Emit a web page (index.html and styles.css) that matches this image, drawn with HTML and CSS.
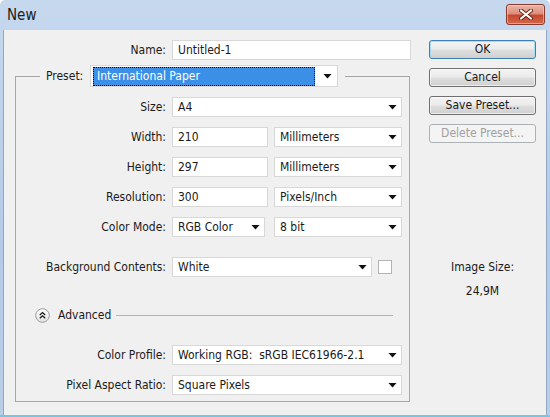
FILE: index.html
```html
<!DOCTYPE html>
<html>
<head>
<meta charset="utf-8">
<link rel="stylesheet" href="styles.css">
</head>
<body>
<div class="window">
  <div class="titlebar">
    <span class="title">New</span>
    <div class="close">
      <svg width="14" height="11" viewBox="0 0 14 11">
        <path d="M2 1.5 L12 9.5 M12 1.5 L2 9.5" stroke="#6b2418" stroke-width="4" stroke-linecap="round"/>
        <path d="M2 1.5 L12 9.5 M12 1.5 L2 9.5" stroke="#ffffff" stroke-width="2.2" stroke-linecap="round"/>
      </svg>
    </div>
  </div>
  <div class="client">
    <div class="main">
      <div class="name-row">
        <span class="lbl">Name:</span>
        <div class="field">Untitled-1</div>
      </div>
      <fieldset class="group">
        <legend class="preset">
          <span class="plabel">Preset:</span>
          <div class="select preset-select"><span class="hl">International Paper</span><i class="arrow"></i></div>
        </legend>
        <div class="row">
          <span class="lbl">Size:</span>
          <div class="select"><span>A4</span><i class="arrow"></i></div>
        </div>
        <div class="row">
          <span class="lbl">Width:</span>
          <div class="pair">
            <div class="field num">210</div>
            <div class="select unit"><span>Millimeters</span><i class="arrow"></i></div>
          </div>
        </div>
        <div class="row">
          <span class="lbl">Height:</span>
          <div class="pair">
            <div class="field num">297</div>
            <div class="select unit"><span>Millimeters</span><i class="arrow"></i></div>
          </div>
        </div>
        <div class="row">
          <span class="lbl">Resolution:</span>
          <div class="pair">
            <div class="field num">300</div>
            <div class="select unit"><span>Pixels/Inch</span><i class="arrow"></i></div>
          </div>
        </div>
        <div class="row">
          <span class="lbl">Color Mode:</span>
          <div class="pair wide-gap">
            <div class="select mode"><span>RGB Color</span><i class="arrow"></i></div>
            <div class="select unit"><span>8 bit</span><i class="arrow"></i></div>
          </div>
        </div>
        <div class="row mt20">
          <span class="lbl">Background Contents:</span>
          <div class="pair">
            <div class="select bg"><span>White</span><i class="arrow"></i></div>
            <div class="swatch"></div>
          </div>
        </div>
        <div class="advanced">
          <svg class="adv-icon" width="15" height="15" viewBox="0 0 15 15">
            <defs>
              <linearGradient id="g" x1="0" y1="0" x2="0" y2="1">
                <stop offset="0" stop-color="#ffffff"/>
                <stop offset="1" stop-color="#e2e2e2"/>
              </linearGradient>
            </defs>
            <circle cx="7.5" cy="7.5" r="6.8" fill="url(#g)" stroke="#9c9c9c" stroke-width="1"/>
            <polyline points="4.8,7 7.5,4.6 10.2,7" fill="none" stroke="#1a1a1a" stroke-width="1.3"/>
            <polyline points="4.8,10.2 7.5,7.8 10.2,10.2" fill="none" stroke="#1a1a1a" stroke-width="1.3"/>
          </svg>
          <span class="adv-text">Advanced</span>
          <span class="adv-line"></span>
        </div>
        <div class="row mt20">
          <span class="lbl">Color Profile:</span>
          <div class="select"><span>Working RGB:&nbsp; sRGB IEC61966-2.1</span><i class="arrow"></i></div>
        </div>
        <div class="row">
          <span class="lbl">Pixel Aspect Ratio:</span>
          <div class="select"><span>Square Pixels</span><i class="arrow"></i></div>
        </div>
      </fieldset>
    </div>
    <div class="side">
      <div class="btn default">OK</div>
      <div class="btn">Cancel</div>
      <div class="btn">Save Preset...</div>
      <div class="btn disabled">Delete Preset...</div>
      <div class="imgsize">
        <div class="is-label">Image Size:</div>
        <div class="is-value">24,9M</div>
      </div>
    </div>
  </div>
</div>
</body>
</html>
```

FILE: styles.css
```css
body {
  margin: 0;
  font-family: "DejaVu Sans Condensed", "DejaVu Sans", sans-serif;
  font-stretch: condensed;
  font-size: 12px;
  color: #1a1a1a;
  background: #ffffff;
}

.window {
  width: 550px;
  height: 417px;
  box-sizing: border-box;
  display: flex;
  flex-direction: column;
  background: linear-gradient(#c5d8ee, #b3cbe6 60%, #b9cfe8);
  border-bottom: 2px solid #74c6e5;
  border-radius: 5px 5px 0 0;
}

.titlebar {
  height: 30px;
  flex: none;
  display: flex;
  justify-content: space-between;
  align-items: flex-start;
  padding: 0 5px 0 7px;
}

.title {
  font-size: 15px;
  line-height: 30px;
  color: #1c1c1c;
}

.close {
  margin-top: 4px;
  width: 39px;
  height: 21px;
  box-sizing: border-box;
  border: 1px solid #8a3a2c;
  border-radius: 3px;
  background: linear-gradient(#ebb4a6 0%, #dc8f7c 45%, #c7482e 55%, #d2684c 100%);
  box-shadow: inset 0 0 0 1px rgba(255, 220, 210, 0.5);
  display: flex;
  align-items: center;
  justify-content: center;
}

.client {
  flex: 1;
  margin: 0 3px;
  border-left: 1px solid #93a8c0;
  border-right: 1px solid #93a8c0;
  background: #f0f0f0;
  display: flex;
  padding: 10px 0 0 11px;
}

.main {
  width: 396px;
  flex: none;
}

.name-row {
  display: grid;
  grid-template-columns: 151px 239px;
  column-gap: 6px;
  align-items: center;
  height: 20px;
}

.lbl {
  text-align: right;
  white-space: nowrap;
}

.field,
.select {
  height: 20px;
  box-sizing: border-box;
  background: #ffffff;
  border: 1px solid #d8d8d8;
  white-space: nowrap;
  overflow: hidden;
  line-height: 18px;
}

.field {
  padding: 0 5px;
}

.select {
  display: flex;
  align-items: center;
  justify-content: space-between;
  padding: 0 4px 0 5px;
}

.arrow {
  flex: none;
  width: 9px;
  height: 5px;
  background: #111111;
  clip-path: polygon(0 0, 100% 0, 50% 100%);
}

.group {
  margin: 5px 0 0 0;
  padding: 10px 7px 6px 0;
  border: 1px solid #a6a6a6;
  width: 395px;
  box-sizing: border-box;
  min-width: 0;
}

.preset {
  margin-left: 24px;
  padding: 0 7px 0 6px;
  display: flex;
  align-items: center;
  height: 22px;
}

.plabel {
  width: 44px;
}

.preset-select {
  width: 248px;
  height: 22px;
  padding: 1px 5px 1px 2px;
}

.hl {
  flex: none;
  width: 222px;
  height: 19px;
  box-sizing: border-box;
  border: 1px dotted #000000;
  background: #3b8fe6;
  color: #ffffff;
  padding-left: 3px;
  line-height: 17px;
}

.row {
  display: grid;
  grid-template-columns: 150px 230px;
  column-gap: 6px;
  align-items: center;
  height: 20px;
  margin-top: 10px;
}

.preset + .row {
  margin-top: 0;
}

.mt20 {
  margin-top: 20px;
}

.pair {
  display: flex;
  gap: 6px;
  align-items: center;
}

.wide-gap {
  gap: 9px;
}

.num {
  width: 96px;
}

.unit {
  width: 128px;
}

.mode {
  width: 93px;
}

.bg {
  width: 200px;
}

.swatch {
  width: 14px;
  height: 14px;
  box-sizing: border-box;
  background: #ffffff;
  border: 1px solid #b3b3b3;
}

.advanced {
  display: flex;
  align-items: center;
  height: 20px;
  margin-top: 28px;
  padding-left: 19px;
}

.adv-icon {
  flex: none;
}

.adv-text {
  margin-left: 8px;
}

.adv-line {
  flex: 1;
  margin: 0 9px 0 5px;
  border-top: 1px solid #b4b4b4;
}

.side {
  margin-left: 18px;
  width: 107px;
  flex: none;
  display: flex;
  flex-direction: column;
}

.btn {
  height: 19px;
  box-sizing: border-box;
  margin-bottom: 9px;
  border: 1px solid #707070;
  border-radius: 3px;
  background: linear-gradient(#f3f3f3 0%, #ebebeb 48%, #dedede 52%, #d0d0d0 100%);
  box-shadow: inset 0 0 0 1px rgba(255, 255, 255, 0.6);
  text-align: center;
  line-height: 17px;
  white-space: nowrap;
}

.btn.default {
  border-color: #3c7fb1;
  box-shadow: inset 0 0 0 1px #a9dcf4;
}

.btn.disabled {
  border-color: #adb2b5;
  background: #f4f4f4;
  box-shadow: none;
  color: #a0a0a0;
}

.imgsize {
  margin-top: 107px;
  text-align: center;
}

.is-label {
  line-height: 16px;
}

.is-value {
  margin-top: 8px;
  line-height: 16px;
}
```
